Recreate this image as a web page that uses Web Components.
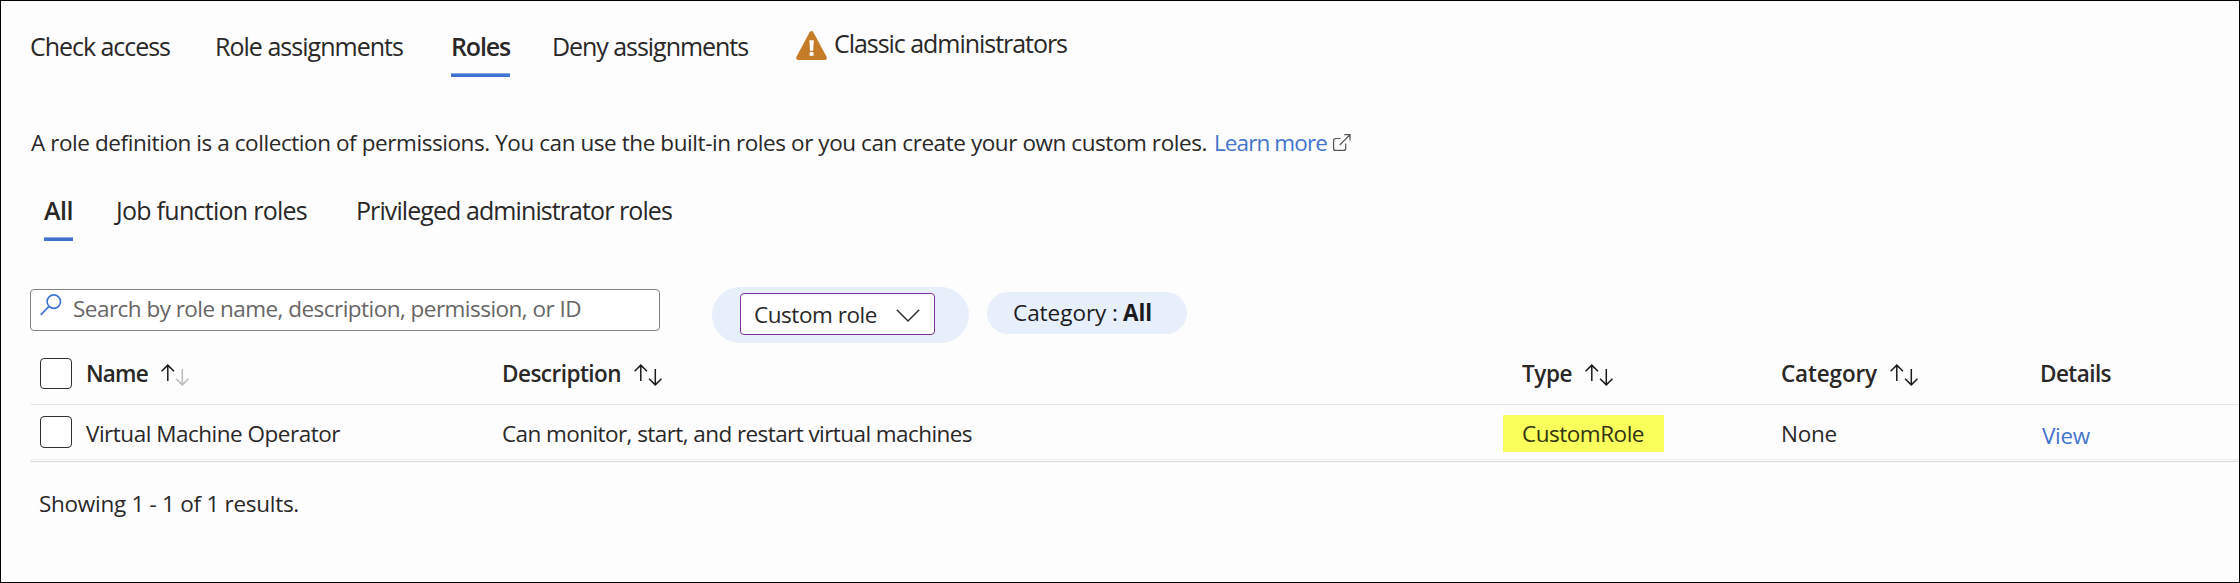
<!DOCTYPE html>
<html lang="en">
<head>
<meta charset="utf-8">
<title>Access control - Roles</title>
<style>
html,body{margin:0;padding:0}
body{width:2240px;height:583px;overflow:hidden;font-family:"Open Sans","Noto Sans",sans-serif;color:#292827;background:#fdfdfe}
</style>
</head>
<body>
<roles-page></roles-page>
<script>
const define = (name, html, setup) => {
  const t = document.createElement('template');
  t.innerHTML = html;
  customElements.define(name, class extends HTMLElement {
    connectedCallback() {
      if (this.shadowRoot) return;
      this.attachShadow({mode: 'open'}).appendChild(t.content.cloneNode(true));
      if (setup) setup(this, this.shadowRoot);
    }
  });
};

/* Text run tracked to a given advance width, with a 1px bearing each side unless flush */
define('fit-text', `<style>
:host{display:block;flex:none;box-sizing:border-box;white-space:nowrap;font-size:22.5px;line-height:30px;height:32px;padding:1px 0 0 1px}
:host([big]){font-size:25px;padding-top:0}
:host([flush]){padding-left:0}
:host([semi]){font-weight:600}
:host([bold]){font-weight:700}
span{display:inline-block}
</style><span><slot></slot></span>`, (el, root) => {
  const w = +el.getAttribute('w'), span = root.querySelector('span');
  const inner = el.hasAttribute('flush') ? w : w - 2;
  const natural = span.getBoundingClientRect().width;
  el.style.width = w + 'px';
  span.style.letterSpacing = ((inner - natural) / el.textContent.length).toFixed(4) + 'px';
});

define('tab-item', `<style>
:host{display:flex;align-items:flex-start;box-sizing:border-box;height:46px;flex:none}
:host([active]){background:linear-gradient(#85a8e4 0 1px,#4072cf 1px) bottom/100% 4px no-repeat}
</style><slot></slot>`);

define('warning-icon', `<style>:host{display:block;width:31px;height:29px;flex:none}svg{display:block}</style>
<svg width="31" height="29" viewBox="0 0 31 29"><path d="M13.6 1.3Q15.5-1.1 17.4 1.3L30.4 25.5Q31.6 29 28.6 29H2.4Q-.6 29 .6 25.5Z" fill="#c57c29"/><path d="M13.4 9.2h4.4l-.6 10.6h-3.2z" fill="#fff"/><circle cx="15.6" cy="22.9" r="2.2" fill="#fff"/></svg>`);

define('external-icon', `<style>:host{display:block;width:18px;height:18px;flex:none}svg{display:block}</style>
<svg width="18" height="18" viewBox="0 0 18 18" fill="none" stroke="#555" stroke-width="1.2"><path d="M7.5 4.5H2.6Q.6 4.5.6 6.5V14.4Q.6 16.4 2.6 16.4H10.7Q12.7 16.4 12.7 14.4V9.5M6.7 11L16.6 1.1M11.3.7H17V6.5"/></svg>`);

define('search-box', `<style>
:host{display:flex;flex:none;box-sizing:border-box;width:630px;height:42px;border:1px solid #828085;border-radius:4px;background:#fff;color:#676665}
svg{display:block;margin:4px 0 0 9px;flex:none}
fit-text{margin:3px 0 0 9px}
</style>
<svg width="23" height="23" viewBox="0 0 23 23" fill="none" stroke="#4377d6" stroke-width="1.7"><circle cx="13.8" cy="7.6" r="6.7"/><path d="M9 12.3L.7 20.8"/></svg>
<fit-text w="510">Search by role name, description, permission, or ID</fit-text>`);

define('role-select', `<style>
:host{display:flex;flex:none;box-sizing:border-box;width:257px;height:56px;border-radius:28px;background:#e7effb;padding:6px 28px}
div{box-sizing:border-box;width:195px;height:42px;border:1px solid #7a349b;border-radius:4px;background:#fff;display:flex}
fit-text{margin:5px 0 0 13px}
svg{display:block;margin:15px 0 0 19px}
</style><div><fit-text w="123" flush>Custom role</fit-text>
<svg width="24" height="14" viewBox="0 0 24 14" fill="none" stroke="#302f2f" stroke-width="1.5"><path d="M.8 .8L12 12L23.2 .8"/></svg></div>`);

define('category-pill', `<style>
:host{display:flex;flex:none;gap:5px;box-sizing:border-box;width:200px;height:42px;border-radius:21px;background:#e7effb;padding:5px 0 0 26px;color:#1b1a1f}
</style><fit-text w="105" flush>Category :</fit-text><fit-text w="29" flush bold>All</fit-text>`);

define('check-box', `<style>
:host{display:block;flex:none;box-sizing:border-box;width:32px;height:31px;border:1.5px solid #302f2f;border-radius:4px;background:#fff;margin-left:10px}
:host([tall]){height:32px;margin-top:1px}
</style>`);

define('sort-arrows', `<style>:host{display:block;flex:none;width:28px;height:22px}svg{display:block}
.down{stroke:var(--down,#1b1a19)}</style>
<svg width="28" height="22" viewBox="0 0 28 22" fill="none" stroke="#1b1a19" stroke-width="1.5"><path d="M6.8 17V1.2M.6 7.3L6.8 1.1L13 7.3"/><path class="down" d="M21.3 5V20.8M15.1 14.7L21.3 20.9L27.5 14.7"/></svg>`);

define('head-cell', `<style>:host{display:flex;align-items:flex-start;font-weight:600}::slotted(sort-arrows){margin:6px 0 0 12px}</style><slot></slot>`);

define('roles-table', `<style>
:host{display:block;border-bottom:1px solid #d8d9dc;padding-bottom:1px}
.row{display:grid;grid-template-columns:55px 416px 1020px 259px 259px 1fr;align-items:start;box-sizing:border-box}
.head{height:62px;padding-top:15px;border-bottom:1px solid #e6e6e9}
.body{height:55px;padding-top:10px;border-bottom:1px solid #ededf0}
.body fit-text{margin-top:3px}
.mark{box-sizing:border-box;width:161px;height:37px;margin-left:-18px;padding-left:18px;background:#faff5c;color:#33350f;display:flex}
a{color:#4474cd;margin:2px 0 0 2px}
</style>
<div class="row head"><check-box></check-box>
<head-cell><fit-text w="64" semi>Name</fit-text><sort-arrows style="--down:#bcbbbb"></sort-arrows></head-cell>
<head-cell><fit-text w="121" semi>Description</fit-text><sort-arrows></sort-arrows></head-cell>
<head-cell><fit-text w="52" semi>Type</fit-text><sort-arrows></sort-arrows></head-cell>
<head-cell><fit-text w="98" semi>Category</fit-text><sort-arrows></sort-arrows></head-cell>
<head-cell><fit-text w="73" semi>Details</fit-text></head-cell></div>
<div class="row body"><check-box tall></check-box>
<fit-text w="256">Virtual Machine Operator</fit-text>
<fit-text w="472">Can monitor, start, and restart virtual machines</fit-text>
<div class="mark"><fit-text w="124">CustomRole</fit-text></div>
<fit-text w="58">None</fit-text>
<a><fit-text w="50">View</fit-text></a></div>`);

define('roles-page', `<style>
:host{display:flex;flex-direction:column;box-sizing:border-box;width:2240px;height:583px;border:1px solid #000;background:#fdfdfe;padding:30px 0 0 29px}
nav,p,.tools{display:flex;align-items:flex-start;margin:0}
p{margin:50px 0 38px;height:30px}
.link{color:#4474cd}
.tools{margin-top:46px}
.tools search-box{margin:2px 52px 0 0}
.tools category-pill{margin:5px 0 0 18px}
.count{margin:26px 0 0 8px}
</style>
<nav>
<tab-item><fit-text big w="142" style="margin-left:-1px">Check access</fit-text></tab-item>
<tab-item style="margin-left:43px"><fit-text big w="190">Role assignments</fit-text></tab-item>
<tab-item active style="margin-left:47px"><fit-text big semi flush w="59">Roles</fit-text></tab-item>
<tab-item style="margin-left:41px"><fit-text big w="198">Deny assignments</fit-text></tab-item>
<tab-item style="margin-left:47px"><warning-icon></warning-icon><fit-text big w="235" style="margin:-3px 0 0 6px">Classic administrators</fit-text></tab-item>
</nav>
<p><fit-text w="1178">A role definition is a collection of permissions. You can use the built-in roles or you can create your own custom roles.</fit-text>
<fit-text class="link" w="115" style="margin-left:5px">Learn more</fit-text>
<external-icon style="margin:7px 0 0 5px"></external-icon></p>
<nav>
<tab-item active style="margin-left:14px"><fit-text big semi flush w="29">All</fit-text></tab-item>
<tab-item style="margin-left:42px"><fit-text big w="193">Job function roles</fit-text></tab-item>
<tab-item style="margin-left:47px"><fit-text big w="318">Privileged administrator roles</fit-text></tab-item>
</nav>
<div class="tools"><search-box></search-box><role-select></role-select><category-pill></category-pill></div>
<roles-table></roles-table>
<fit-text class="count" w="262">Showing 1 - 1 of 1 results.</fit-text>`);
</script>
</body>
</html>
